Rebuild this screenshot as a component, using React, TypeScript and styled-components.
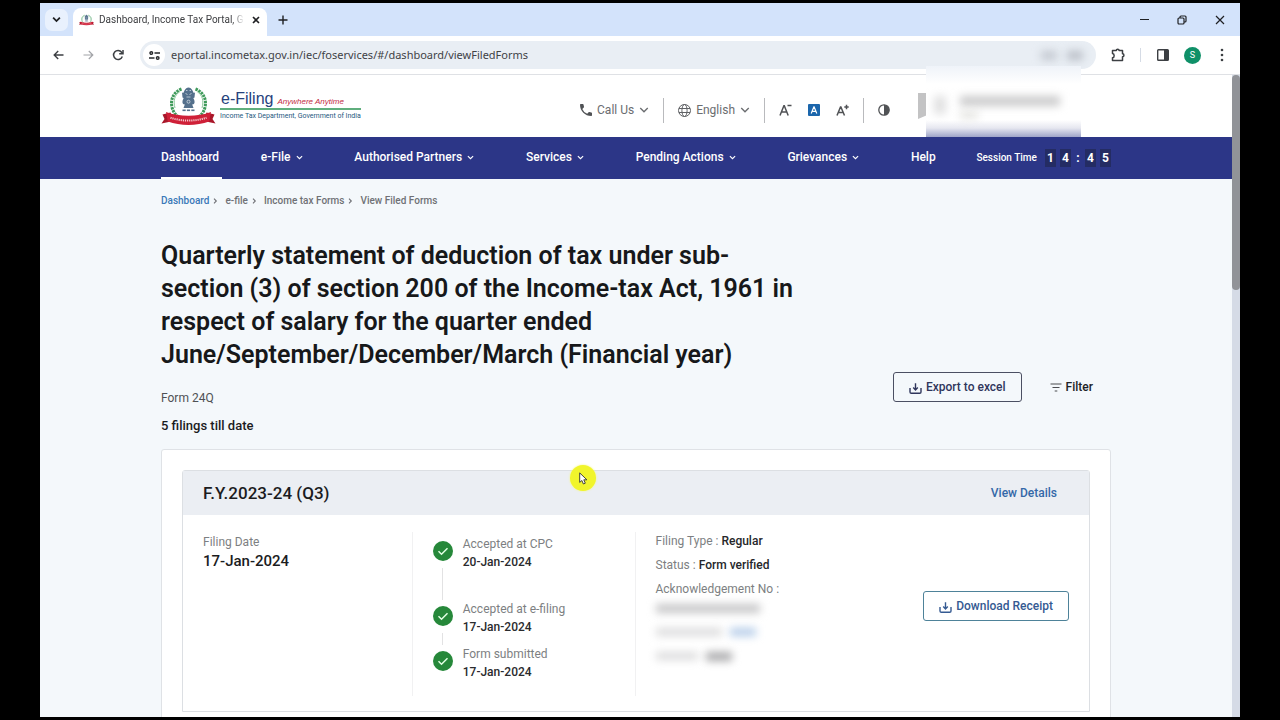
import React from 'react';
import styled, { createGlobalStyle, css } from 'styled-components';

const GlobalStyle = createGlobalStyle`
  *, *::before, *::after { box-sizing: border-box; }
  html, body { margin: 0; background: #000; }
  body { font-family: Roboto, "Liberation Sans", sans-serif; color: #1b1c1e; }
  h1, h2, p, ol, ul, dl, dd { margin: 0; padding: 0; font-weight: inherit; }
  ol, ul { list-style: none; }
  button { font-family: inherit; margin: 0; padding: 0; border: 0; background: none; color: inherit; cursor: pointer; }
  a { color: inherit; text-decoration: none; }
  svg { display: block; flex: none; }
`;

/* ---------- browser window ---------- */

const Screen = styled.div`
  height: 100vh;
  padding: 3px 40px;
  overflow: hidden;
`;

const Window = styled.div`
  position: relative;
  height: 100%;
  display: flex;
  flex-direction: column;
  background: #fff;
  overflow: hidden;
`;

const TabStrip = styled.div`
  flex: none;
  height: 33px;
  display: flex;
  align-items: center;
  padding: 0 10px 0 5px;
  background: #d3e3fb;
  color: #1f2023;
`;

const TabSearch = styled.button`
  width: 23px;
  height: 22px;
  display: grid;
  place-items: center;
  border-radius: 7px;
  background: #e9f1fd;
`;

const Tab = styled.div`
  align-self: flex-end;
  width: 194px;
  height: 28px;
  margin-left: 5px;
  padding: 0 6px 4px;
  display: flex;
  align-items: center;
  gap: 5px;
  border-radius: 8px 8px 0 0;
  background: #fff;
`;

const TabTitle = styled.span`
  flex: 1;
  white-space: nowrap;
  font: 10px/16px Roboto, sans-serif;
  color: #3c3d40;
  mask-image: linear-gradient(to right, #000 92%, transparent);
`;

const ChromeButton = styled.button<{ $w?: number }>`
  width: ${(p) => p.$w ?? 20}px;
  height: 20px;
  flex: none;
  display: grid;
  place-items: center;
`;

const WindowControls = styled.div`
  margin-left: auto;
  display: flex;
  gap: 18px;
`;

const Toolbar = styled.div`
  flex: none;
  height: 39px;
  display: flex;
  align-items: center;
  padding: 0 8px;
  gap: 10px;
  border-bottom: 1px solid #dfe1e5;
  color: #3c3f43;
`;

const UrlBar = styled.div`
  flex: 1;
  height: 28px;
  margin-left: 2px;
  padding: 0 3px;
  display: flex;
  align-items: center;
  gap: 6px;
  border-radius: 14px;
  background: #e9eef4;
`;

const SiteInfo = styled.button`
  width: 22px;
  height: 22px;
  display: grid;
  place-items: center;
  border-radius: 50%;
  background: #fff;
`;

const UrlInput = styled.input`
  flex: 1;
  min-width: 0;
  border: 0;
  padding: 0;
  outline: 0;
  background: none;
  font: 11px/18px "Noto Sans", sans-serif;
  color: #3f4246;
`;

const UrlHints = styled.div`
  display: flex;
  gap: 10px;
  padding-right: 10px;
`;

const ToolbarActions = styled.div`
  display: flex;
  align-items: center;
  gap: 11px;
  margin-left: 2px;
`;

const ToolbarDivider = styled.span`
  width: 1px;
  height: 14px;
  margin: 0 1px;
  background: #d5dbe5;
`;

const Profile = styled.button`
  width: 17px;
  height: 17px;
  border-radius: 50%;
  background: #0f9068;
  color: #fff;
  font-size: 9px;
  line-height: 17px;
`;

const Viewport = styled.div`
  flex: 1;
  min-height: 0;
  display: flex;
  background: #f4f8fb;
`;

const Page = styled.div`
  flex: 1;
  min-width: 0;
  overflow: hidden;
`;

const Scrollbar = styled.div`
  flex: none;
  width: 8px;
  background: #d5dbe6;
`;

const ScrollThumb = styled.div`
  height: 215px;
  border-radius: 4px;
  background: #919398;
`;

/* ---------- portal header ---------- */

const Container = styled.div`
  width: 100%;
  max-width: 950px;
  margin: 0 auto;
`;

const Header = styled.header`
  background: #fff;
`;

const HeaderRow = styled(Container)`
  height: 62px;
  display: flex;
  align-items: center;
`;

const Brand = styled.a`
  display: flex;
  align-items: center;
  gap: 4px;
`;

const BrandText = styled.span`
  display: flex;
  flex-direction: column;
`;

const BrandTop = styled.span`
  display: flex;
  align-items: baseline;
  gap: 4px;
  padding-left: 1px;
  border-bottom: 2px solid #5fae7d;
  font: 16px/18px "Liberation Sans", sans-serif;
  color: #26427c;
`;

const Slogan = styled.em`
  font: italic 8px/12px "Liberation Sans", sans-serif;
  color: #c22a3f;
`;

const Department = styled.span`
  font-size: 7px;
  line-height: 12px;
  white-space: nowrap;
  color: #1f5a80;
`;

const Tools = styled.div`
  margin-left: auto;
  display: flex;
  align-items: center;
  padding-top: 8px;
  color: #55575b;
`;

const ToolGroup = styled.div<{ $gap?: number }>`
  height: 25px;
  display: flex;
  align-items: center;
  gap: ${(p) => p.$gap ?? 0}px;
  padding: 0 14px;
  & + & { border-left: 1px solid #b9babd; }
`;

const ToolButton = styled.button`
  display: flex;
  align-items: center;
  gap: 5px;
  font-size: 12px;
  line-height: 18px;
  color: #6b6d70;
`;

const AccountSlot = styled.div`
  width: 193px;
  height: 34px;
  margin-left: 14px;
`;

const AvatarEdge = styled.div`
  width: 10px;
  height: 26px;
  background: #c3c3c4;
  clip-path: polygon(0 0, 100% 0, 100% 84%, 0 100%);
`;

/* ---------- navigation ---------- */

const NavBar = styled.nav`
  background: #2c3687;
  color: #fff;
`;

const NavRow = styled(Container)`
  height: 42px;
  display: flex;
  align-items: stretch;
  justify-content: space-between;
`;

const NavLink = styled.a<{ $active?: boolean }>`
  display: flex;
  align-items: center;
  gap: 5px;
  padding-right: ${(p) => (p.$active ? 3 : 0)}px;
  margin-right: ${(p) => (p.$active ? -13 : 0)}px;
  font-size: 12px;
  font-weight: 500;
  border-bottom: 2px solid ${(p) => (p.$active ? '#fff' : 'transparent')};
  white-space: nowrap;
`;

const Session = styled.div`
  display: flex;
  align-items: center;
  gap: 8px;
  margin-left: -11px;
  padding-bottom: 1px;
  font-size: 10px;
  font-weight: 500;
`;

const Clock = styled.div`
  display: flex;
  align-items: center;
  gap: 4px;
  font-size: 12px;
  font-weight: 700;
`;

const Digit = styled.span`
  width: 11px;
  height: 18px;
  line-height: 18px;
  text-align: center;
  background: #242c63;
`;

const Colon = styled.span`
  width: 6px;
  text-align: center;
`;

/* ---------- content ---------- */

const Crumbs = styled.ol`
  display: flex;
  padding: 14px 0 0;
  font-size: 10px;
  line-height: 16px;
  font-weight: 500;
  color: #6f7175;
`;

const Crumb = styled.li`
  display: flex;
  align-items: center;
  gap: 4px;
  & + & { margin-left: 7px; }
  a { color: #3a78b8; }
`;

const Intro = styled.div`
  display: flex;
  align-items: flex-end;
  justify-content: space-between;
  margin-top: 30px;
`;

const IntroText = styled.div`
  flex: 0 1 640px;
`;

const Title = styled.h1`
  font-size: 25px;
  line-height: 33px;
  font-weight: 600;
  color: #17181a;
`;

const FormName = styled.p`
  margin-top: 18px;
  font-size: 12px;
  line-height: 18px;
  color: #4f5154;
`;

const FilingCount = styled.p`
  margin-top: 10px;
  font-size: 13px;
  line-height: 18px;
  font-weight: 500;
`;

const IntroActions = styled.div`
  display: flex;
  align-items: center;
  gap: 28px;
  padding: 0 18px 33px 0;
`;

const OutlineButton = styled.button<{ $tone: 'navy' | 'blue' }>`
  height: 30px;
  padding: 0 15px;
  display: flex;
  align-items: center;
  gap: 4px;
  border-radius: 3px;
  font-size: 12px;
  font-weight: 500;
  white-space: nowrap;
  ${(p) =>
    p.$tone === 'navy'
      ? css`border: 1px solid #4b4f62; color: #30365c;`
      : css`border: 1px solid #4e8299; color: #355a92; background: #fff;`}
`;

const FilterButton = styled.button`
  display: flex;
  align-items: center;
  gap: 4px;
  font-size: 12px;
  font-weight: 500;
  color: #202226;
`;

const Panel = styled.section`
  margin-top: 14px;
  padding: 20px;
  border: 1px solid #dfe2e6;
  border-radius: 3px;
  background: #fff;
`;

const Card = styled.article`
  border: 1px solid #dcdfe3;
  border-radius: 3px 3px 0 0;
`;

const CardHead = styled.header`
  height: 44px;
  padding: 0 32px 0 20px;
  display: flex;
  align-items: center;
  justify-content: space-between;
  background: #ebeef3;
`;

const Period = styled.h2`
  font-size: 17px;
  line-height: 24px;
  font-weight: 500;
`;

const DetailsLink = styled.a`
  font-size: 12px;
  font-weight: 500;
  color: #3468a8;
`;

const CardBody = styled.div`
  display: grid;
  grid-template-columns: 229fr 223fr 455fr;
  padding: 17px 0 15px;
`;

const Column = styled.div`
  min-height: 164px;
  padding: 0 20px;
  & + & { border-left: 1px solid #f1f1f2; }
`;

const Label = styled.p`
  font-size: 12px;
  line-height: 18px;
  color: #7d7f82;
`;

const FilingDate = styled.p`
  font-size: 15px;
  line-height: 20px;
  font-weight: 500;
`;

const FilingColumn = styled(Column)`
  padding-top: 1px;
`;

const Steps = styled.ol`
  padding-top: 3px;
`;

const Step = styled.li<{ $tall?: boolean }>`
  height: ${(p) => (p.$tall ? 65 : 45)}px;
  display: flex;
  gap: 10px;
`;

const Rail = styled.div`
  display: flex;
  flex-direction: column;
  align-items: center;
  gap: 7px;
  padding-top: 6px;
`;

const RailLine = styled.span`
  width: 1px;
  flex: 1;
  background: #e2e2e3;
`;

const StepDate = styled.p`
  font-size: 12px;
  line-height: 18px;
  font-weight: 500;
  color: #2a2b2e;
`;

const InfoColumn = styled(Column)`
  display: flex;
  align-items: center;
  justify-content: space-between;
`;

const Facts = styled.dl`
  align-self: flex-start;
  font-size: 12px;
  line-height: 18px;
  color: #7d7f82;
`;

const Fact = styled.div`
  display: flex;
  gap: 3px;
  margin-bottom: 6px;
  dd { font-weight: 500; color: #26272a; }
`;

const ReceiptAction = styled.div`
  padding-bottom: 16px;
`;

const SmudgeRow = styled.div`
  display: flex;
  gap: 8px;
  height: 24px;
`;

const Smudge = styled.span<{ $w: number; $h?: number; $color?: string; $blur?: number }>`
  display: block;
  width: ${(p) => p.$w}px;
  height: ${(p) => p.$h ?? 8}px;
  background: ${(p) => p.$color ?? '#dcdcdd'};
  filter: blur(${(p) => p.$blur ?? 4}px);
`;

/* ---------- overlays ---------- */

const AccountVeil = styled.div`
  position: absolute;
  top: 63px;
  right: 159px;
  width: 155px;
  height: 71px;
  padding: 30px 8px 0;
  display: flex;
  gap: 14px;
  overflow: hidden;
  background: linear-gradient(to bottom, #eff3f9 0, #fff 18px, #fff 54px, #e6e7f0 62px, #9fa5c8 71px);
`;

const VeilLines = styled.div`
  display: flex;
  flex-direction: column;
  gap: 6px;
`;

const Pointer = styled.div`
  position: absolute;
  left: 530px;
  top: 462px;
  width: 26px;
  height: 26px;
  padding: 7px 0 0 9px;
  border-radius: 50%;
  background: #f1f52c;
  filter: drop-shadow(0 0 1px #f6f98a);
`;

/* ---------- drawings ---------- */

const Chevron = ({ size = 8, w = 1.3 }: { size?: number; w?: number }) => (
  <svg width={size} height={size} viewBox="0 0 8 8" fill="none" stroke="currentColor" strokeWidth={w}>
    <path d="M1 2.4 4 5.4 7 2.4" />
  </svg>
);

const CrumbArrow = () => (
  <svg width="5" height="8" viewBox="0 0 5 8" fill="none" stroke="currentColor" strokeWidth="1.1">
    <path d="M1 1.7 3.300 4 1 6.300" />
  </svg>
);

const Emblem = ({ width, height }: { width: number; height: number }) => (
  <svg width={width} height={height} viewBox="0 0 54 40" fill="none">
    <path d="M20 3C12 6 8 14 11 23c1 3 3 6 6 8" stroke="#3f9a5b" strokeWidth="3" strokeDasharray="2.4 .8" />
    <path d="M34 3c8 3 12 11 9 20-1 3-3 6-6 8" stroke="#3f9a5b" strokeWidth="3" strokeDasharray="2.4 .8" />
    <path d="M18.500 5.500C13 9 11.500 15 13.500 22M35.500 5.500C41 9 42.500 15 40.500 22" stroke="#8cc79b" strokeWidth="1" />
    <g fill="#54708c">
      <path d="M23 4.500c1-2 2.400-3 4-3s3 1 4 3l1.500 3-1 3.500 1 3h-11l1-3-1-3.500z" />
      <path d="M20.500 6.500l2.500 1v5l-2-1zM33.500 6.500l-2.500 1v5l2-1z" />
      <rect x="21" y="13" width="12" height="5.500" rx="2" />
      <path d="M23.500 18h7l1.500 4H22z" />
      <rect x="21" y="23.500" width="3.200" height="1.600" />
      <rect x="25.400" y="23.500" width="3.200" height="1.600" />
      <rect x="29.800" y="23.500" width="3.200" height="1.600" />
    </g>
    <g stroke="#dfe7ee" strokeWidth=".7">
      <path d="M24.500 4.500h1.500M28 4.500h1.500M24 7.500l2 1M30 7.500l-2 1M25 11h4" />
      <circle cx="27" cy="15.700" r="1.500" />
    </g>
    <path d="M0 37.500 3 33 1 28.500 9 26.500 12 35zM54 37.500 51 33 53 28.500 45 26.500 42 35z" fill="#a9172a" />
    <path d="M4.500 26C18 31 36 31 49.500 26l-1.800 9.500C35 40 19 40 6.300 35.500z" fill="#cf2038" />
    <path d="M9 31.700C20 35.500 34 35.500 45 31.700" stroke="#fff" strokeWidth="2" strokeDasharray="1.200 .9" opacity=".75" />
  </svg>
);

const DownloadIcon = () => (
  <svg width="13" height="13" viewBox="0 0 13 13" fill="none" stroke="currentColor" strokeWidth="1.400">
    <path d="M1 7v4c0 .8.500 1.300 1.300 1.300h8.400c.8 0 1.300-.5 1.300-1.300V7" />
    <path d="M6.500 2.200v6.500M4.200 6.600l2.300 2.300 2.300-2.300" />
  </svg>
);

const CheckIcon = () => (
  <svg width="20" height="20" viewBox="0 0 20 20" fill="none">
    <circle cx="10" cy="10" r="10" fill="#26883a" />
    <path d="M5.500 10.300l3 2.900 6-6" stroke="#e3ffe4" strokeWidth="1.500" />
  </svg>
);

/* ---------- data ---------- */

const navItems = [
  { label: 'Dashboard', active: true },
  { label: 'e-File', menu: true },
  { label: 'Authorised Partners', menu: true },
  { label: 'Services', menu: true },
  { label: 'Pending Actions', menu: true },
  { label: 'Grievances', menu: true },
  { label: 'Help' },
];

const crumbs = ['Dashboard', 'e-file', 'Income tax Forms', 'View Filed Forms'];

const steps = [
  { label: 'Accepted at CPC', date: '20-Jan-2024', tall: true },
  { label: 'Accepted at e-filing', date: '17-Jan-2024' },
  { label: 'Form submitted', date: '17-Jan-2024' },
];

export default function App() {
  return (
    <Screen>
      <GlobalStyle />
      <Window>
        <TabStrip>
          <TabSearch aria-label="Search tabs"><Chevron size={9} w={1.6} /></TabSearch>
          <Tab>
            <Emblem width={15} height={12} />
            <TabTitle>Dashboard, Income Tax Portal, G</TabTitle>
            <ChromeButton $w={14} aria-label="Close tab">
              <svg width="8" height="8" viewBox="0 0 8 8" stroke="currentColor" strokeWidth="1.600"><path d="M1 1l6 6M7 1 1 7" /></svg>
            </ChromeButton>
          </Tab>
          <ChromeButton $w={32} aria-label="New tab">
            <svg width="10" height="10" viewBox="0 0 10 10" stroke="currentColor" strokeWidth="1.400"><path d="M5 .5v9M.5 5h9" /></svg>
          </ChromeButton>
          <WindowControls>
            <ChromeButton aria-label="Minimize">
              <svg width="9" height="9" viewBox="0 0 9 9" stroke="currentColor"><path d="M0 4.500h9" /></svg>
            </ChromeButton>
            <ChromeButton aria-label="Restore">
              <svg width="10" height="10" viewBox="0 0 10 10" fill="none" stroke="currentColor" strokeWidth="1.200">
                <rect x="1" y="3" width="6" height="6" rx="1" /><path d="M3 3V2c0-.6.400-1 1-1h4c.6 0 1 .4 1 1v4c0 .6-.4 1-1 1H7" />
              </svg>
            </ChromeButton>
            <ChromeButton aria-label="Close">
              <svg width="10" height="10" viewBox="0 0 10 10" stroke="currentColor" strokeWidth="1.200"><path d="M1 1l8 8M9 1 1 9" /></svg>
            </ChromeButton>
          </WindowControls>
        </TabStrip>

        <Toolbar>
          <ChromeButton aria-label="Back">
            <svg width="11" height="10" viewBox="0 0 11 10" fill="none" stroke="currentColor" strokeWidth="1.400"><path d="M10.500 5H1.200M5.200 1l-4 4 4 4" /></svg>
          </ChromeButton>
          <ChromeButton aria-label="Forward">
            <svg width="11" height="10" viewBox="0 0 11 10" fill="none" stroke="#a2a4a8" strokeWidth="1.200"><path d="M.5 5h9.300M5.800 1l4 4-4 4" /></svg>
          </ChromeButton>
          <ChromeButton aria-label="Reload">
            <svg width="12" height="12" viewBox="0 0 12 12" fill="none" stroke="currentColor" strokeWidth="1.500"><path d="M10.300 7.500A4.500 4.500 0 1 1 9.600 3.200L10.700 4.500" /><path d="M11 1v3.800H7.200" /></svg>
          </ChromeButton>
          <UrlBar>
            <SiteInfo aria-label="Site information">
              <svg width="11" height="9" viewBox="0 0 11 9" fill="none" stroke="#26282b" strokeWidth="1.400">
                <circle cx="2.300" cy="2" r="1.300" /><path d="M5.500 2H11M0 7h5.500" /><circle cx="8.700" cy="7" r="1.300" />
              </svg>
            </SiteInfo>
            <UrlInput aria-label="Address" readOnly value="eportal.incometax.gov.in/iec/foservices/#/dashboard/viewFiledForms" />
            <UrlHints>
              <Smudge $w={16} $h={9} $color="#c3c8d0" />
              <Smudge $w={16} $h={9} $color="#b9bec6" />
            </UrlHints>
          </UrlBar>
          <ToolbarActions>
            <ChromeButton aria-label="Extensions">
              <svg width="15" height="14" viewBox="0 0 15 14" fill="none" stroke="currentColor" strokeWidth="1.500" strokeLinejoin="round">
                <path d="M1.500 2.500H5.300c0-1.800 2.800-1.800 2.800 0h3.400v3.300c1.900 0 1.900 2.900 0 2.900v3.800h-10V9.800c2.200-.2 2.200-4 0-4.200z" />
              </svg>
            </ChromeButton>
            <ToolbarDivider />
            <ChromeButton aria-label="Side panel">
              <svg width="12" height="12" viewBox="0 0 12 12"><rect x=".7" y=".7" width="10.600" height="10.600" rx=".8" fill="none" stroke="currentColor" strokeWidth="1.400" /><path d="M7 1h4v10H7z" fill="currentColor" /></svg>
            </ChromeButton>
            <Profile aria-label="Profile S">S</Profile>
            <ChromeButton aria-label="Menu">
              <svg width="4" height="14" viewBox="0 0 4 14" fill="currentColor"><circle cx="2" cy="2" r="1.300" /><circle cx="2" cy="7" r="1.300" /><circle cx="2" cy="12" r="1.300" /></svg>
            </ChromeButton>
          </ToolbarActions>
        </Toolbar>

        <Viewport>
          <Page>
            <Header>
              <HeaderRow>
                <Brand href="#home">
                  <Emblem width={55} height={40} />
                  <BrandText>
                    <BrandTop>e-Filing <Slogan>Anywhere Anytime</Slogan></BrandTop>
                    <Department>Income Tax Department, Government of India</Department>
                  </BrandText>
                </Brand>
                <Tools>
                  <ToolGroup>
                    <ToolButton>
                      <svg width="12" height="12" viewBox="0 0 12 12" fill="#505255"><path d="M2.400 0H.7C.3 0 0 .3 0 .7 0 6.900 5.100 12 11.300 12c.4 0 .7-.3.700-.7V9.200c0-.4-.3-.6-.6-.7L9.300 8c-.3 0-.5 0-.7.200L7.200 9.800A9 9 0 0 1 2.300 4.900L3.800 3.400c.2-.2.200-.4.200-.7L3.500.6C3.400.3 3.200 0 2.900 0z" /></svg>
                      Call Us <Chevron size={10} w={1.1} />
                    </ToolButton>
                  </ToolGroup>
                  <ToolGroup>
                    <ToolButton>
                      <svg width="13" height="13" viewBox="0 0 13 13" fill="none" stroke="#606265"><circle cx="6.500" cy="6.500" r="6" /><ellipse cx="6.500" cy="6.500" rx="2.600" ry="6" /><path d="M1 4.500h11M1 8.500h11" /></svg>
                      English <Chevron size={10} w={1.1} />
                    </ToolButton>
                  </ToolGroup>
                  <ToolGroup $gap={16}>
                    <button aria-label="Decrease text size">
                      <svg width="13" height="12" viewBox="0 0 13 12" fill="none" stroke="#505255" strokeWidth="1.500"><path d="M1 11.500 4.900 1.800h.4L9.200 11.500M2.500 8h5.200M8.500 1.500H12.500" /></svg>
                    </button>
                    <button aria-label="Normal text size">
                      <svg width="12" height="12" viewBox="0 0 12 12" fill="none"><rect width="12" height="12" rx="1" fill="#1b66ac" /><path d="M3.200 9.500 5.900 2.800h.2L8.800 9.500M4.200 7.300h3.600" stroke="#fff" strokeWidth="1.200" /></svg>
                    </button>
                    <button aria-label="Increase text size">
                      <svg width="13" height="12" viewBox="0 0 13 12" fill="none" stroke="#505255" strokeWidth="1.500"><path d="M1 11.500 4.500 3h.4L8.500 11.500M2.300 8.500h5M8.300 3h4.400M10.500.8v4.400" /></svg>
                    </button>
                  </ToolGroup>
                  <ToolGroup>
                    <button aria-label="Toggle contrast">
                      <svg width="12" height="12" viewBox="0 0 12 12"><circle cx="6" cy="6" r="5.200" fill="none" stroke="#505255" strokeWidth="1.300" /><path d="M6 .8a5.200 5.200 0 0 1 0 10.400z" fill="#505255" /></svg>
                    </button>
                  </ToolGroup>
                  <AccountSlot><AvatarEdge /></AccountSlot>
                </Tools>
              </HeaderRow>
            </Header>

            <NavBar>
              <NavRow>
                {navItems.map((n) => (
                  <NavLink key={n.label} href="#nav" $active={n.active}>
                    {n.label}
                    {n.menu && <Chevron size={7} />}
                  </NavLink>
                ))}
                <Session>
                  Session Time
                  <Clock>
                    <Digit>1</Digit><Digit>4</Digit><Colon>:</Colon><Digit>4</Digit><Digit>5</Digit>
                  </Clock>
                </Session>
              </NavRow>
            </NavBar>

            <Container as="main">
              <Crumbs>
                {crumbs.map((c, i) => (
                  <Crumb key={c}>
                    {i === 0 ? <a href="#dashboard">{c}</a> : c}
                    {i < crumbs.length - 1 && <CrumbArrow />}
                  </Crumb>
                ))}
              </Crumbs>

              <Intro>
                <IntroText>
                  <Title>
                    Quarterly statement of deduction of tax under sub-section (3) of section 200 of the
                    Income-tax Act, 1961 in respect of salary for the quarter ended
                    June/September/December/March (Financial year)
                  </Title>
                  <FormName>Form 24Q</FormName>
                  <FilingCount>5 filings till date</FilingCount>
                </IntroText>
                <IntroActions>
                  <OutlineButton $tone="navy"><DownloadIcon />Export to excel</OutlineButton>
                  <FilterButton>
                    <svg width="12" height="9" viewBox="0 0 12 9" stroke="#4b4d51" strokeWidth="1.200"><path d="M.5 1h11M2.500 4.500h7M4.700 8h2.600" /></svg>
                    Filter
                  </FilterButton>
                </IntroActions>
              </Intro>

              <Panel>
                <Card>
                  <CardHead>
                    <Period>F.Y.2023-24 (Q3)</Period>
                    <DetailsLink href="#details">View Details</DetailsLink>
                  </CardHead>
                  <CardBody>
                    <FilingColumn>
                      <Label>Filing Date</Label>
                      <FilingDate>17-Jan-2024</FilingDate>
                    </FilingColumn>
                    <Column>
                      <Steps>
                        {steps.map((s, i) => (
                          <Step key={s.label} $tall={s.tall}>
                            <Rail><CheckIcon />{i < steps.length - 1 && <RailLine />}</Rail>
                            <div>
                              <Label>{s.label}</Label>
                              <StepDate>{s.date}</StepDate>
                            </div>
                          </Step>
                        ))}
                      </Steps>
                    </Column>
                    <InfoColumn>
                      <Facts>
                        <Fact><dt>Filing Type :</dt><dd>Regular</dd></Fact>
                        <Fact><dt>Status :</dt><dd>Form verified</dd></Fact>
                        <Fact><dt>Acknowledgement No :</dt></Fact>
                        <SmudgeRow><Smudge $w={104} $h={9} $color="#c6c6c7" /></SmudgeRow>
                        <SmudgeRow><Smudge $w={66} /><Smudge $w={26} $color="#b3cbe8" /></SmudgeRow>
                        <SmudgeRow><Smudge $w={42} /><Smudge $w={26} $h={9} $color="#a9a9ab" /></SmudgeRow>
                      </Facts>
                      <ReceiptAction>
                        <OutlineButton $tone="blue"><DownloadIcon />Download Receipt</OutlineButton>
                      </ReceiptAction>
                    </InfoColumn>
                  </CardBody>
                </Card>
              </Panel>
            </Container>
          </Page>
          <Scrollbar><ScrollThumb /></Scrollbar>
        </Viewport>

        <AccountVeil>
          <Smudge $w={12} $h={18} $color="#e0e0e1" />
          <VeilLines>
            <Smudge $w={100} $h={10} $color="#cacacb" />
            <Smudge $w={18} $h={6} $color="#dededa" />
          </VeilLines>
        </AccountVeil>
        <Pointer>
          <svg width="9" height="13" viewBox="0 0 9 13"><path d="M.7.900v9.500l2.200-1.900 1.500 3.500 1.900-.8-1.500-3.400h3.100z" fill="#fff" stroke="#333" strokeWidth=".9" /></svg>
        </Pointer>
      </Window>
    </Screen>
  );
}
